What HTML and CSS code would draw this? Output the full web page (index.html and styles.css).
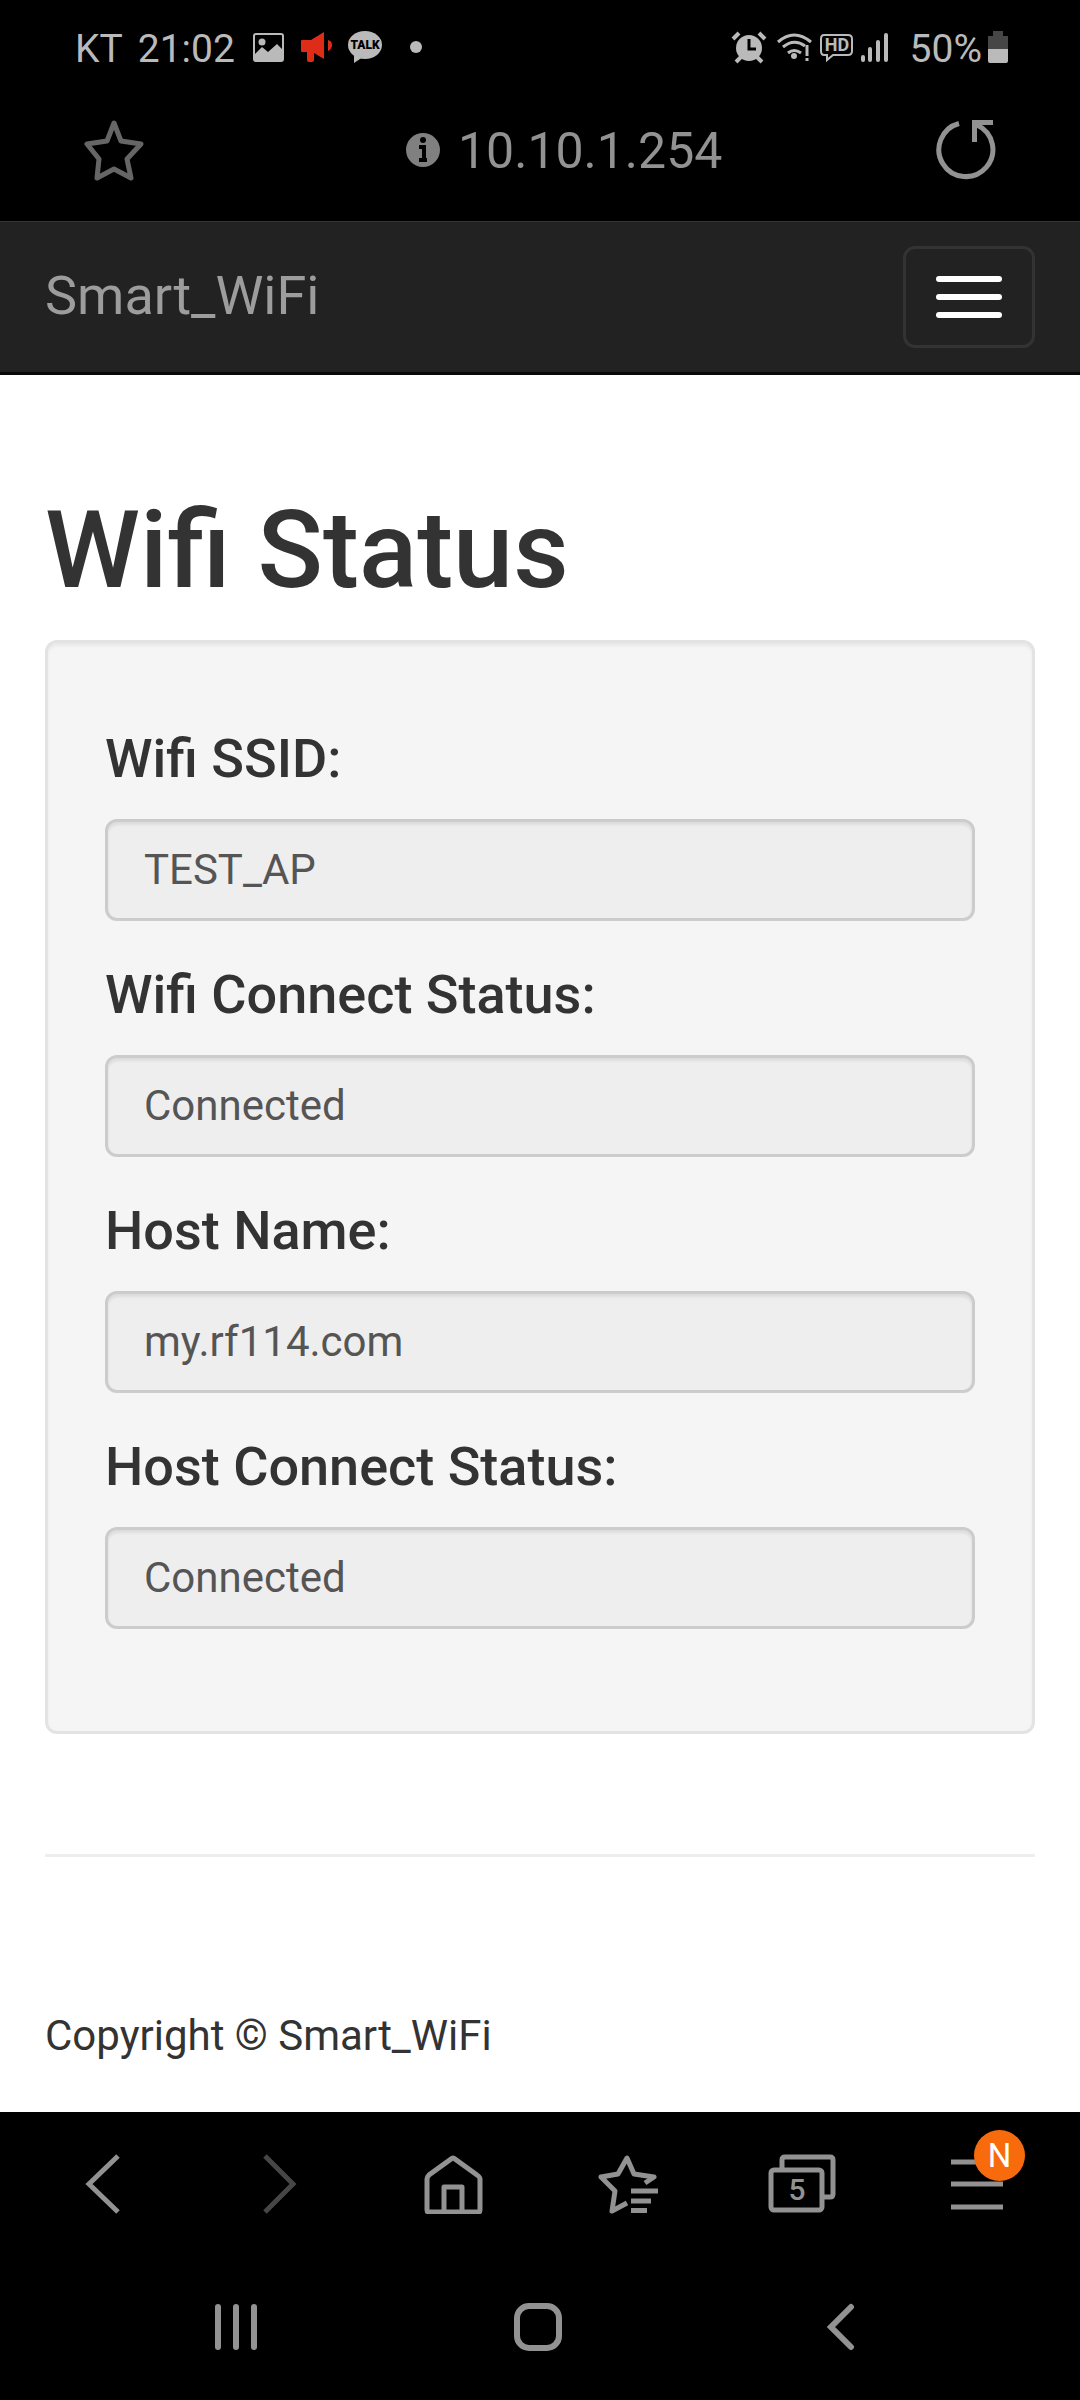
FILE: index.html
```html
<!DOCTYPE html>
<html lang="en">
<head>
    <meta charset="UTF-8">
    <meta name="viewport" content="width=device-width, initial-scale=1.0">
    <title>Smart_WiFi</title>
    <link rel="stylesheet" href="styles.css">
</head>
<body>
    <!-- Phone status bar -->
    <div class="status-bar">
        <div class="status-left">
            <span>KT</span>
            <span>21:02</span>
            <svg width="36" height="40" viewBox="0 0 36 40">
                <rect x="4" y="5" width="29" height="27" rx="2" fill="none" stroke="#bababa" stroke-width="2"/>
                <circle cx="12" cy="13" r="3.5" fill="#bababa"/>
                <path d="M4 26l8-8 6 5 9-8 6 6v11H4z" fill="#bababa"/>
            </svg>
            <svg width="32" height="40" viewBox="0 0 32 40">
                <path d="M0 12q0-1 1-1h9L23 3v27l-10-6v7q0 2-2 2H8q-2 0-2-2v-8H1q-1 0-1-1z" fill="#de2c18"/>
                <path d="M27 11q4 1 4 5t-4 6z" fill="#de2c18"/>
            </svg>
            <svg width="36" height="40" viewBox="0 0 36 40">
                <ellipse cx="17" cy="16" rx="17" ry="14" fill="#bababa"/>
                <path d="M6 24v10l9-6z" fill="#bababa"/>
                <text x="17" y="20" class="talk-text">TALK</text>
            </svg>
            <svg width="34" height="40" viewBox="0 0 34 40">
                <circle cx="17" cy="18" r="6" fill="#bababa"/>
            </svg>
        </div>
        <div class="status-right">
            <svg width="39" height="40" viewBox="0 0 39 40">
                <circle cx="18" cy="19" r="13" fill="#bababa"/>
                <path d="M18 10v10h7" fill="none" stroke="#000" stroke-width="3"/>
                <path d="M2 10l6-6M34 10l-6-6M5 33l5-5M31 33l-5-5" stroke="#bababa" stroke-width="4"/>
            </svg>
            <svg width="37" height="40" viewBox="0 0 37 40">
                <path d="M2 13q16-14 33 0M7 18q11-9 22-1M12 24q6-5 13 0" fill="none" stroke="#bababa" stroke-width="3"/>
                <circle cx="18" cy="27" r="3" fill="#bababa"/>
                <path d="M31 16v11M31 29v3" stroke="#bababa" stroke-width="3"/>
            </svg>
            <svg width="35" height="40" viewBox="0 0 35 40">
                <path d="M5 6h24q4 0 4 4v12q0 4-4 4H14l-6 5v-5H5q-3 0-3-4V10q0-4 3-4z" fill="none" stroke="#bababa" stroke-width="2"/>
                <text x="18" y="22" class="hd-text">HD</text>
            </svg>
            <svg width="30" height="40" viewBox="0 0 30 40">
                <path d="M3 28v3M10 20v11M18 13v18M26 6v25" stroke="#bababa" stroke-width="4" stroke-linecap="round"/>
            </svg>
            <span class="battery">50%
                <svg width="22" height="40" viewBox="0 0 22 40">
                    <path d="M1 7h5V2h10v5h5v13H1z" fill="#464646"/>
                    <path d="M1 20h20v12q0 2-2 2H3q-2 0-2-2z" fill="#bababa"/>
                </svg>
            </span>
        </div>
    </div>

    <!-- Browser address bar -->
    <div class="url-bar">
        <button type="button" class="icon-btn" aria-label="Bookmark">
            <svg width="60" height="62" viewBox="0 0 60 62">
                <path d="M30 3l7 18 20 3-14 15 4 19-17-9-17 9 2-19L3 24l20-3z" fill="none" stroke="#666" stroke-width="5" stroke-linejoin="round"/>
            </svg>
        </button>
        <div class="address">
            <svg width="34" height="38" viewBox="0 0 34 38">
                <circle cx="17" cy="18" r="17" fill="#808080"/>
                <circle cx="17" cy="8" r="3" fill="#000"/>
                <path d="M13 15h5v13M13 28h8" fill="none" stroke="#000" stroke-width="4"/>
            </svg>
            <input type="text" class="address-input" value="10.10.1.254" aria-label="Address">
        </div>
        <button type="button" class="icon-btn" aria-label="Reload">
            <svg width="60" height="62" viewBox="0 0 60 62">
                <path d="M23 3.500A27 27 0 1 0 41 5" fill="none" stroke="#929292" stroke-width="5"/>
                <path d="M38.500 22V2.500H57" fill="none" stroke="#929292" stroke-width="5"/>
            </svg>
        </button>
    </div>

    <nav class="navbar">
        <a href="#" class="navbar-brand">Smart_WiFi</a>
        <button type="button" class="navbar-toggle" aria-label="Toggle navigation">
            <span class="icon-bar"></span>
            <span class="icon-bar"></span>
            <span class="icon-bar"></span>
        </button>
    </nav>

    <main class="container">
        <h1>Wifi Status</h1>
        <form class="well">
            <div class="form-group">
                <label for="ssid">Wifi SSID:</label>
                <input type="text" id="ssid" class="form-control" value="TEST_AP" readonly>
            </div>
            <div class="form-group">
                <label for="wifi_status">Wifi Connect Status:</label>
                <input type="text" id="wifi_status" class="form-control" value="Connected" readonly>
            </div>
            <div class="form-group">
                <label for="host">Host Name:</label>
                <input type="text" id="host" class="form-control" value="my.rf114.com" readonly>
            </div>
            <div class="form-group">
                <label for="host_status">Host Connect Status:</label>
                <input type="text" id="host_status" class="form-control" value="Connected" readonly>
            </div>
        </form>
        <hr>
        <footer>
            <p>Copyright © Smart_WiFi</p>
        </footer>
    </main>

    <!-- Browser toolbar -->
    <div class="toolbar">
        <button type="button" class="icon-btn" aria-label="Back">
            <svg width="60" height="60" viewBox="0 0 60 60">
                <path d="M45 2L16 30l29 28" fill="none" stroke="#929292" stroke-width="5"/>
            </svg>
        </button>
        <button type="button" class="icon-btn" aria-label="Forward">
            <svg width="60" height="60" viewBox="0 0 60 60">
                <path d="M17 2l28 28-28 28" fill="none" stroke="#464646" stroke-width="5"/>
            </svg>
        </button>
        <button type="button" class="icon-btn" aria-label="Home">
            <svg width="60" height="60" viewBox="0 0 60 60">
                <path d="M4 56V25q0-2 2-4L28 5q2-2 4 0l22 16q3 2 3 4v31q0 2-2 2H6q-2 0-2-2z" fill="none" stroke="#929292" stroke-width="5"/>
                <path d="M21 58V33h18v25" fill="none" stroke="#929292" stroke-width="5" stroke-linejoin="round"/>
            </svg>
        </button>
        <button type="button" class="icon-btn" aria-label="Bookmarks list">
            <svg width="60" height="60" viewBox="0 0 60 60">
                <path d="M47 29l9-6-20-3-7-16-9 16-17 3 14 14-3 20 15-8" fill="none" stroke="#929292" stroke-width="5" stroke-linejoin="round"/>
                <path d="M33 37h28M33 47h20M33 56.500h16" stroke="#929292" stroke-width="5"/>
            </svg>
        </button>
        <button type="button" class="icon-btn" aria-label="Tabs">
            <svg width="70" height="60" viewBox="0 0 70 60">
                <path d="M14 15V6q0-3 3-3h45q3 0 3 3v34q0 3-3 3h-8" fill="none" stroke="#929292" stroke-width="5"/>
                <rect x="3" y="16" width="51" height="40" rx="3" fill="none" stroke="#929292" stroke-width="5"/>
                <text x="29" y="46" class="tab-count">5</text>
            </svg>
        </button>
        <button type="button" class="icon-btn menu-btn" aria-label="Menu">
            <svg width="54" height="60" viewBox="0 0 54 60">
                <path d="M0 8h52M0 30h52M0 53h52" stroke="#929292" stroke-width="5"/>
            </svg>
            <span class="badge">N</span>
        </button>
    </div>

    <!-- Android navigation buttons -->
    <div class="system-nav">
        <button type="button" class="icon-btn" aria-label="Recent apps">
            <svg width="50" height="50" viewBox="0 0 50 50">
                <path d="M7 4v40M25 4v40M43 4v40" stroke="#929292" stroke-width="6" stroke-linecap="round"/>
            </svg>
        </button>
        <button type="button" class="icon-btn" aria-label="Home screen">
            <svg width="50" height="50" viewBox="0 0 50 50">
                <rect x="4" y="3" width="42" height="42" rx="12" fill="none" stroke="#929292" stroke-width="6"/>
            </svg>
        </button>
        <button type="button" class="icon-btn" aria-label="System back">
            <svg width="50" height="50" viewBox="0 0 50 50">
                <path d="M36 4L16 24l20 20" fill="none" stroke="#929292" stroke-width="6" stroke-linecap="round"/>
            </svg>
        </button>
    </div>
</body>
</html>
```

FILE: styles.css
```css
* {
    box-sizing: border-box;
}
body {
    margin: 0;
    min-height: 100vh;
    display: flex;
    flex-direction: column;
    background: #fff;
    color: #333;
    font-family: Roboto, "Liberation Sans", sans-serif;
    font-size: 42px;
    line-height: 60px;
}
svg {
    display: block;
    flex: none;
}
button {
    font-family: inherit;
    cursor: pointer;
}
.icon-btn {
    display: flex;
    align-items: center;
    justify-content: center;
    padding: 0;
    border: none;
    background: none;
}

/* status bar */
.status-bar {
    display: flex;
    justify-content: space-between;
    align-items: center;
    height: 98px;
    padding: 0 71px 0 75px;
    background: #000;
    color: #bababa;
    font-size: 39px;
}
.status-left {
    display: flex;
    align-items: center;
    gap: 15px;
}
.status-right {
    display: flex;
    align-items: center;
    gap: 6px;
}
.battery {
    display: flex;
    align-items: center;
    gap: 5px;
    margin-left: 14px;
}
.talk-text {
    font-size: 12px;
    font-weight: 900;
    text-anchor: middle;
    fill: #000;
}
.hd-text {
    font-size: 18px;
    font-weight: 700;
    text-anchor: middle;
    fill: #bababa;
}

/* address bar */
.url-bar {
    display: flex;
    justify-content: space-between;
    align-items: center;
    height: 123px;
    padding: 0 84px 17px;
    background: #000;
}
.address {
    display: flex;
    align-items: center;
    gap: 18px;
    padding-left: 52px;
}
.address-input {
    width: 268px;
    padding: 0;
    border: none;
    background: none;
    color: #929292;
    font-family: inherit;
    font-size: 50px;
}

/* page */
.navbar {
    display: flex;
    justify-content: space-between;
    align-items: center;
    height: 154px;
    padding: 0 45px;
    background: #222;
    border-top: 1px solid #333;
    border-bottom: 3px solid #080808;
}
.navbar-brand {
    padding-bottom: 2px;
    color: #9d9d9d;
    font-size: 54px;
    text-decoration: none;
}
.navbar-toggle {
    display: flex;
    flex-direction: column;
    gap: 12px;
    padding: 27px 30px;
    background: none;
    border: 3px solid #333;
    border-radius: 12px;
}
.icon-bar {
    width: 66px;
    height: 6px;
    background: #fff;
    border-radius: 3px;
}
.container {
    flex: 1;
    padding: 115px 45px 46px;
}
h1 {
    margin: 0 0 30px;
    font-size: 108px;
    font-weight: 500;
    line-height: 120px;
}
.well {
    padding: 87px 57px 57px;
    background: #f5f5f5;
    border: 3px solid #e3e3e3;
    border-radius: 12px;
    box-shadow: inset 0 3px 3px rgba(0, 0, 0, 0.05);
}
.form-group {
    margin-bottom: 45px;
}
.form-group label {
    display: block;
    margin-bottom: 31px;
    font-size: 54px;
    font-weight: 500;
    line-height: 58px;
}
.form-control {
    display: block;
    width: 100%;
    height: 102px;
    padding: 17px 36px 19px;
    background: #eee;
    border: 3px solid #ccc;
    border-radius: 12px;
    box-shadow: inset 0 3px 3px rgba(0, 0, 0, 0.075);
    color: #555;
    font-family: inherit;
    font-size: 42px;
}
hr {
    margin: 120px 0 60px;
    border: 0;
    border-top: 3px solid #eee;
}
footer {
    padding-top: 89px;
}
footer p {
    margin: 0;
}

/* bottom bars */
.toolbar {
    display: flex;
    height: 144px;
    padding: 0 15px;
    background: #000;
}
.toolbar .icon-btn {
    flex: 1;
}
.tab-count {
    font-size: 30px;
    font-weight: 500;
    text-anchor: middle;
    fill: #929292;
}
.menu-btn {
    position: relative;
}
.badge {
    position: absolute;
    top: 18px;
    right: 40px;
    width: 51px;
    height: 51px;
    border-radius: 50%;
    background: #f76b0c;
    color: #fff;
    font-size: 33px;
    line-height: 52px;
    text-align: center;
}
.system-nav {
    display: flex;
    height: 144px;
    padding: 0 89px 0 85px;
    background: #000;
}
.system-nav .icon-btn {
    flex: 1;
}
```
